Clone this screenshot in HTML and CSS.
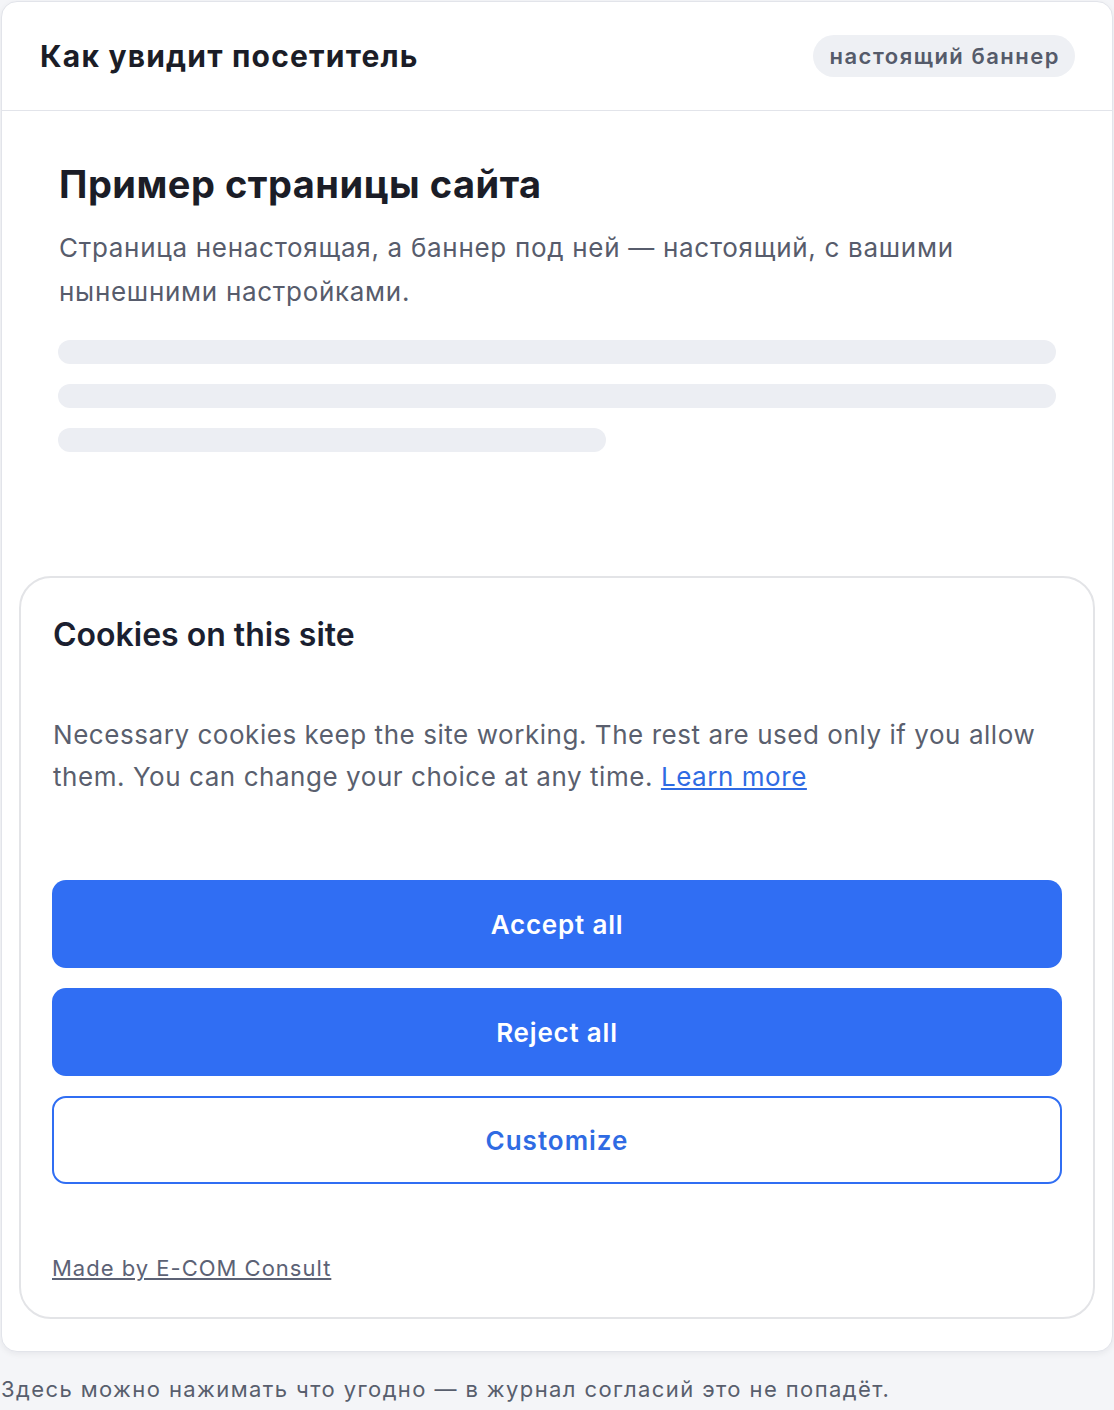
FILE: index.html
```html
<!DOCTYPE html>
<html lang="ru">
<head>
    <meta charset="UTF-8">
    <meta name="viewport" content="width=device-width, initial-scale=1.0">
    <title>Как увидит посетитель</title>
    <link rel="stylesheet" href="styles.css">
</head>
<body>
    <div class="panel">
        <!-- Шапка -->
        <div class="panel-head">
            <h2>Как увидит посетитель</h2>
            <span class="badge">настоящий баннер</span>
        </div>

        <!-- Пример страницы -->
        <div class="preview">
            <h1>Пример страницы сайта</h1>
            <p class="lead">Страница ненастоящая, а баннер под ней — настоящий, с вашими нынешними настройками.</p>

            <div class="skeleton"></div>
            <div class="skeleton"></div>
            <div class="skeleton short"></div>

            <!-- Баннер -->
            <div class="banner">
                <h3>Cookies on this site</h3>
                <p class="banner-text">Necessary cookies keep the site working. The rest are used only if you allow them. You can change your choice at any time. <a href="#">Learn more</a></p>

                <div class="banner-buttons">
                    <button class="btn">Accept all</button>
                    <button class="btn">Reject all</button>
                    <button class="btn btn-outline">Customize</button>
                </div>

                <a class="made-by" href="#">Made by E-COM Consult</a>
            </div>
        </div>
    </div>

    <p class="note">Здесь можно нажимать что угодно — в журнал согласий это не попадёт.</p>
</body>
</html>
```

FILE: styles.css
```css
* {
    margin: 0;
    padding: 0;
    box-sizing: border-box;
}

body {
    font-family: Inter, "Noto Sans", sans-serif;
    background-color: #f4f5f8;
    color: #1b1d27;
}

.panel {
    margin: 1px 1px 0 1px;
    background-color: #fff;
    border: 1px solid #e2e4ea;
    border-radius: 16px;
    box-shadow: 0 2px 6px rgba(20, 24, 40, 0.06);
}

.panel-head {
    height: 109px;
    display: flex;
    justify-content: space-between;
    align-items: center;
    padding: 0 37px 0 38px;
    border-bottom: 1px solid #e2e4ea;
}

.panel-head h2 {
    font-size: 30px;
    font-weight: 700;
    color: #1b1d27;
    letter-spacing: 1.2px;
}

.badge {
    display: inline-flex;
    align-items: center;
    height: 42px;
    padding: 0 15px 0 16px;
    border-radius: 21px;
    background-color: #eef0f4;
    color: #555b6a;
    font-size: 22px;
    font-weight: 600;
    letter-spacing: 1.5px;
}

.preview {
    padding: 50px 17px 32px 17px;
}

.preview h1 {
    font-size: 38px;
    line-height: 46px;
    font-weight: 700;
    margin: 0 40px;
    color: #1b1d27;
    letter-spacing: 0.5px;
}

.lead {
    margin: 19px 40px 0 40px;
    font-size: 26px;
    line-height: 44px;
    color: #575c6c;
    letter-spacing: 0.7px;
}

.skeleton {
    height: 24px;
    margin: 20px 39px 0 39px;
    border-radius: 12px;
    background-color: #eceef3;
}

.lead + .skeleton {
    margin-top: 26px;
}

.skeleton.short {
    width: 548px;
}

/* Баннер cookies */
.banner {
    margin-top: 124px;
    border: 2px solid #e3e4e7;
    border-radius: 32px;
    padding: 38px 31px 34px 31px;
}

.banner h3 {
    font-size: 32px;
    line-height: 38px;
    font-weight: 600;
    color: #1b1f30;
    margin-left: 1px;
}

.banner-text {
    margin: 60px 0 0 1px;
    font-size: 26px;
    line-height: 42px;
    color: #5a5f6e;
    letter-spacing: 0.55px;
}

.banner-text a {
    color: #2f6be3;
}

.banner-buttons {
    margin-top: 82px;
    display: flex;
    flex-direction: column;
    gap: 20px;
}

.btn {
    height: 88px;
    border: none;
    border-radius: 14px;
    background-color: #306ef3;
    color: #fff;
    font-family: Inter, "Noto Sans", sans-serif;
    font-size: 26px;
    font-weight: 600;
    letter-spacing: 0.8px;
    cursor: pointer;
}

.btn-outline {
    background-color: #fff;
    border: 2px solid #306ef3;
    color: #2f6be3;
    letter-spacing: 1px;
}

.made-by {
    display: inline-block;
    margin-top: 69px;
    font-size: 22px;
    line-height: 30px;
    color: #5c6275;
    letter-spacing: 1px;
}

.note {
    margin-top: 22px;
    font-size: 22px;
    line-height: 30px;
    color: #585e6d;
    padding-left: 1px;
    letter-spacing: 1.4px;
}
```
